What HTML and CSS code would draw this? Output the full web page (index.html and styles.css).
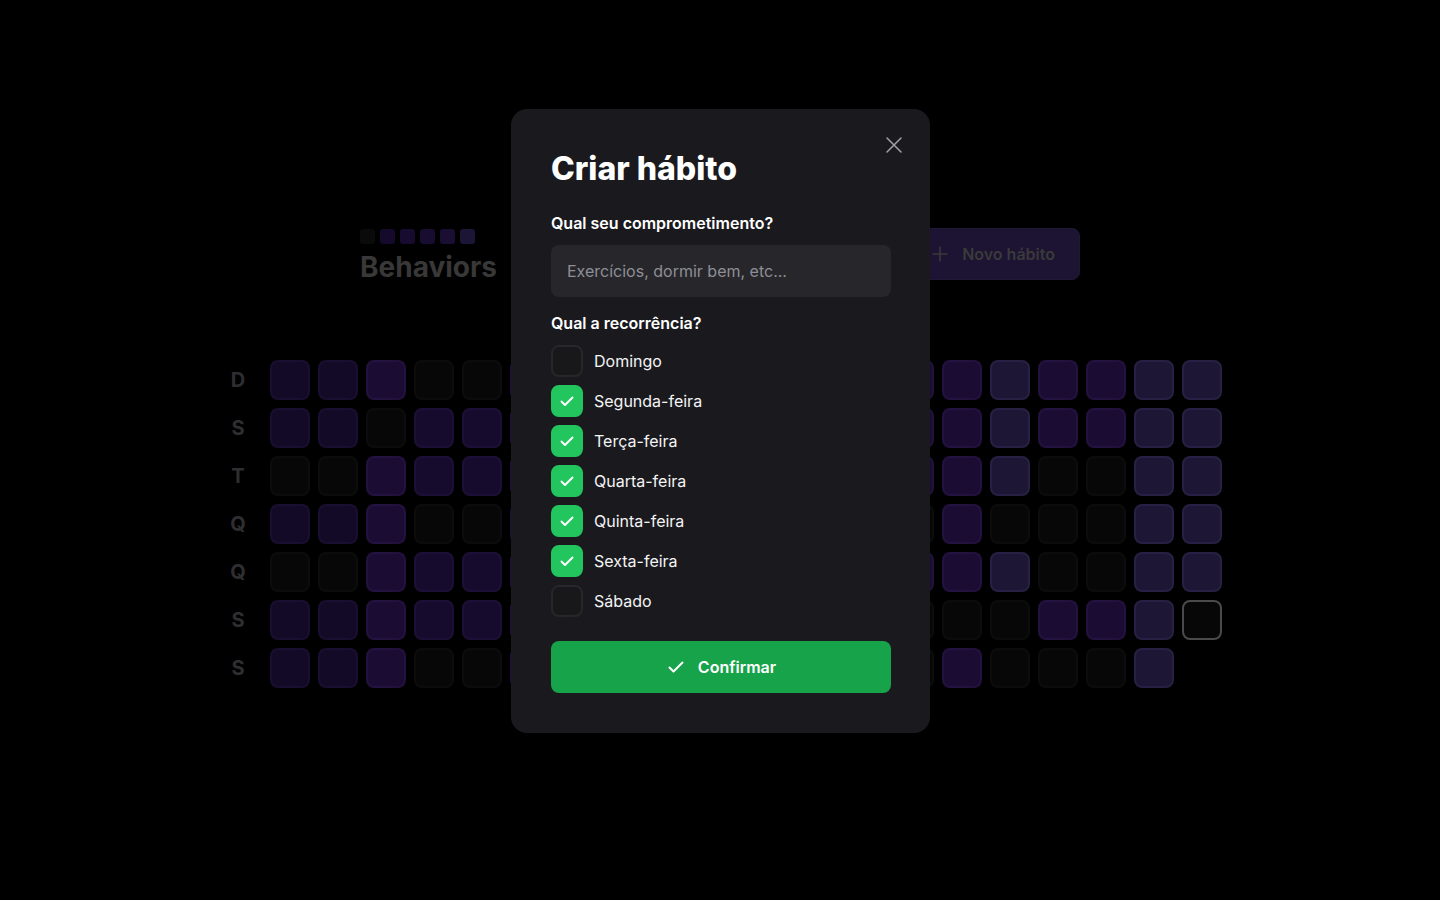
FILE: index.html
```html
<!DOCTYPE html>
<html lang="pt-BR">
<head>
<meta charset="utf-8">
<title>Behaviors - Criar hábito</title>
<link rel="stylesheet" href="styles.css">
</head>
<body>
<div class="page">
  <header class="header">
    <div class="logo">
      <div class="logo-squares">
        <span class="sq sq-0"></span>
        <span class="sq sq-1"></span>
        <span class="sq sq-2"></span>
        <span class="sq sq-3"></span>
        <span class="sq sq-4"></span>
        <span class="sq sq-5"></span>
      </div>
      <div class="logo-text">Behaviors</div>
    </div>
    <button class="new-habit" type="button">
      <svg class="plus" width="20" height="20" viewBox="0 0 20 20" fill="none"><path d="M3 10h14M10 3v14" stroke="currentColor" stroke-width="1.6" stroke-linecap="round"/></svg>
      <span>Novo hábito</span>
    </button>
  </header>

  <section class="summary">
    <div class="weekdays">
      <div class="wd">D</div>
      <div class="wd">S</div>
      <div class="wd">T</div>
      <div class="wd">Q</div>
      <div class="wd">Q</div>
      <div class="wd">S</div>
      <div class="wd">S</div>
    </div>
    <div class="days">
      <!-- row D -->
      <div class="d l1"></div><div class="d l1"></div><div class="d l3"></div><div class="d l0"></div><div class="d l0"></div>
      <div class="d l3"></div><div class="d l2"></div><div class="d l2"></div><div class="d l3"></div><div class="d l0"></div>
      <div class="d l3"></div><div class="d l3"></div><div class="d l3"></div><div class="d l3"></div><div class="d l3"></div>
      <div class="d l4"></div><div class="d l3"></div><div class="d l3"></div><div class="d l4"></div><div class="d l4"></div>
      <!-- row S -->
      <div class="d l1"></div><div class="d l1"></div><div class="d l0"></div><div class="d l2"></div><div class="d l2"></div>
      <div class="d l3"></div><div class="d l3"></div><div class="d l0"></div><div class="d l2"></div><div class="d l3"></div>
      <div class="d l3"></div><div class="d l2"></div><div class="d l3"></div><div class="d l3"></div><div class="d l3"></div>
      <div class="d l4"></div><div class="d l3"></div><div class="d l3"></div><div class="d l4"></div><div class="d l4"></div>
      <!-- row T -->
      <div class="d l0"></div><div class="d l0"></div><div class="d l3"></div><div class="d l2"></div><div class="d l2"></div>
      <div class="d l3"></div><div class="d l0"></div><div class="d l3"></div><div class="d l3"></div><div class="d l2"></div>
      <div class="d l3"></div><div class="d l0"></div><div class="d l3"></div><div class="d l3"></div><div class="d l3"></div>
      <div class="d l4"></div><div class="d l0"></div><div class="d l0"></div><div class="d l4"></div><div class="d l4"></div>
      <!-- row Q -->
      <div class="d l1"></div><div class="d l1"></div><div class="d l3"></div><div class="d l0"></div><div class="d l0"></div>
      <div class="d l2"></div><div class="d l3"></div><div class="d l3"></div><div class="d l0"></div><div class="d l3"></div>
      <div class="d l3"></div><div class="d l3"></div><div class="d l2"></div><div class="d l0"></div><div class="d l3"></div>
      <div class="d l0"></div><div class="d l0"></div><div class="d l0"></div><div class="d l4"></div><div class="d l4"></div>
      <!-- row Q -->
      <div class="d l0"></div><div class="d l0"></div><div class="d l3"></div><div class="d l2"></div><div class="d l2"></div>
      <div class="d l3"></div><div class="d l2"></div><div class="d l3"></div><div class="d l3"></div><div class="d l0"></div>
      <div class="d l3"></div><div class="d l3"></div><div class="d l3"></div><div class="d l3"></div><div class="d l3"></div>
      <div class="d l4"></div><div class="d l0"></div><div class="d l0"></div><div class="d l4"></div><div class="d l4"></div>
      <!-- row S -->
      <div class="d l1"></div><div class="d l1"></div><div class="d l3"></div><div class="d l2"></div><div class="d l2"></div>
      <div class="d l3"></div><div class="d l3"></div><div class="d l2"></div><div class="d l0"></div><div class="d l3"></div>
      <div class="d l3"></div><div class="d l2"></div><div class="d l0"></div><div class="d l0"></div><div class="d l0"></div>
      <div class="d l0"></div><div class="d l3"></div><div class="d l3"></div><div class="d l4"></div><div class="d today"></div>
      <!-- row S -->
      <div class="d l1"></div><div class="d l1"></div><div class="d l3"></div><div class="d l0"></div><div class="d l0"></div>
      <div class="d l3"></div><div class="d l0"></div><div class="d l3"></div><div class="d l3"></div><div class="d l3"></div>
      <div class="d l2"></div><div class="d l3"></div><div class="d l3"></div><div class="d l0"></div><div class="d l3"></div>
      <div class="d l0"></div><div class="d l0"></div><div class="d l0"></div><div class="d l4"></div><div class="d empty"></div>
    </div>
  </section>
</div>

<div class="modal" role="dialog" aria-labelledby="modal-title">
  <button class="close" type="button" aria-label="Fechar">
    <svg width="24" height="24" viewBox="0 0 24 24" fill="none"><path d="M5 5l14 14M19 5L5 19" stroke="currentColor" stroke-width="1.5" stroke-linecap="round"/></svg>
  </button>
  <h2 class="modal-title" id="modal-title">Criar hábito</h2>
  <form class="form">
    <label class="field-label" for="title">Qual seu comprometimento?</label>
    <input class="field-input" id="title" type="text" placeholder="Exercícios, dormir bem, etc...">

    <div class="field-label field-label-2">Qual a recorrência?</div>
    <div class="checks">
      <div class="check-row"><span class="box"></span><span class="check-text">Domingo</span></div>
      <div class="check-row"><span class="box checked"><svg width="20" height="20" viewBox="0 0 20 20" fill="none"><path d="M4.5 10.5l3.5 3.5 7.5-7.5" stroke="#fff" stroke-width="2" stroke-linecap="round" stroke-linejoin="round"/></svg></span><span class="check-text">Segunda-feira</span></div>
      <div class="check-row"><span class="box checked"><svg width="20" height="20" viewBox="0 0 20 20" fill="none"><path d="M4.5 10.5l3.5 3.5 7.5-7.5" stroke="#fff" stroke-width="2" stroke-linecap="round" stroke-linejoin="round"/></svg></span><span class="check-text">Terça-feira</span></div>
      <div class="check-row"><span class="box checked"><svg width="20" height="20" viewBox="0 0 20 20" fill="none"><path d="M4.5 10.5l3.5 3.5 7.5-7.5" stroke="#fff" stroke-width="2" stroke-linecap="round" stroke-linejoin="round"/></svg></span><span class="check-text">Quarta-feira</span></div>
      <div class="check-row"><span class="box checked"><svg width="20" height="20" viewBox="0 0 20 20" fill="none"><path d="M4.5 10.5l3.5 3.5 7.5-7.5" stroke="#fff" stroke-width="2" stroke-linecap="round" stroke-linejoin="round"/></svg></span><span class="check-text">Quinta-feira</span></div>
      <div class="check-row"><span class="box checked"><svg width="20" height="20" viewBox="0 0 20 20" fill="none"><path d="M4.5 10.5l3.5 3.5 7.5-7.5" stroke="#fff" stroke-width="2" stroke-linecap="round" stroke-linejoin="round"/></svg></span><span class="check-text">Sexta-feira</span></div>
      <div class="check-row"><span class="box"></span><span class="check-text">Sábado</span></div>
    </div>

    <button class="confirm" type="button">
      <svg width="20" height="20" viewBox="0 0 20 20" fill="none"><path d="M3.5 10.5l4 4 9-9" stroke="#fff" stroke-width="2" stroke-linecap="round" stroke-linejoin="round"/></svg>
      <span>Confirmar</span>
    </button>
  </form>
</div>
</body>
</html>
```

FILE: styles.css
```css
* { box-sizing: border-box; }

html, body {
  margin: 0;
  padding: 0;
  background: #000;
  color: #fff;
  font-family: Inter, "Noto Sans", Roboto, sans-serif;
  width: 1440px;
  height: 900px;
  overflow: hidden;
}

.page {
  display: flex;
  flex-direction: column;
  align-items: center;
  gap: 80px;
  padding-top: 228px;
}

.header {
  width: 720px;
  height: 52px;
  display: flex;
  justify-content: space-between;
  align-items: center;
}

.logo {
  display: flex;
  flex-direction: column;
  padding-top: 1px;
  height: 52px;
}

.logo-squares {
  display: flex;
  gap: 5px;
}

.sq {
  width: 15px;
  height: 15px;
  border-radius: 3px;
  background: #160b2c;
}
.sq-0 { background: #0a0a0a; }
.sq-1 { background: #150a2b; }
.sq-2 { background: #170b2f; }
.sq-3 { background: #180c31; }
.sq-4 { background: #1a0f33; }
.sq-5 { background: #1d1535; }

.logo-text {
  margin-top: 9px;
  font-size: 28px;
  line-height: 28px;
  font-weight: 700;
  color: #383838;
}

.new-habit {
  display: flex;
  align-items: center;
  gap: 12px;
  height: 52px;
  padding: 0 24px 0 25px;
  background: #1c1432;
  border: 1px solid #211838;
  border-radius: 8px;
  color: #3a3a3a;
  font-family: inherit;
  font-size: 16px;
  font-weight: 600;
}

.summary {
  display: flex;
  gap: 12px;
}

.weekdays {
  display: grid;
  grid-template-rows: repeat(7, 40px);
  gap: 8px;
}

.wd {
  width: 40px;
  height: 40px;
  display: flex;
  align-items: center;
  justify-content: center;
  font-size: 20px;
  font-weight: 700;
  color: #2e2e30;
}

.days {
  display: grid;
  grid-template-columns: repeat(20, 40px);
  grid-template-rows: repeat(7, 40px);
  gap: 8px;
}

.d {
  width: 40px;
  height: 40px;
  border-radius: 8px;
  border: 2px solid #0c0c0c;
  background: #070707;
}
.l0 { background: #070707; border-color: #0c0c0c; }
.l1 { background: #130a27; border-color: #1a0e31; }
.l2 { background: #160a2d; border-color: #1d1036; }
.l3 { background: #1b0c34; border-color: #23123e; }
.l4 { background: #1d1634; border-color: #272042; }
.today { background: #070707; border-color: #4a4a4a; }
.empty { background: transparent; border-color: transparent; }

/* Modal */
.modal {
  position: absolute;
  left: 511px;
  top: 109px;
  width: 419px;
  padding: 40px 39px 40px 40px;
  background: #1a1a1e;
  border-radius: 16px;
}

.close {
  position: absolute;
  right: 24px;
  top: 24px;
  width: 24px;
  height: 24px;
  padding: 0;
  border: 0;
  background: transparent;
  color: #a1a1aa;
  display: flex;
}

.modal-title {
  margin: 0;
  font-size: 32px;
  line-height: 40px;
  font-weight: 800;
  color: #fff;
}

.form {
  margin-top: 24px;
  display: flex;
  flex-direction: column;
}

.field-label {
  font-size: 16px;
  line-height: 20px;
  font-weight: 600;
  color: #fff;
}

.field-label-2 { margin-top: 16px; }

.field-input {
  margin-top: 12px;
  height: 52px;
  padding: 16px;
  border: 0;
  border-radius: 8px;
  background: #27272b;
  color: #fff;
  font-family: inherit;
  font-size: 16px;
  line-height: 20px;
  outline: none;
}
.field-input::placeholder { color: #8e8e95; }

.checks {
  margin-top: 12px;
  display: flex;
  flex-direction: column;
  gap: 8px;
}

.check-row {
  display: flex;
  align-items: center;
  gap: 11px;
}

.box {
  width: 32px;
  height: 32px;
  border-radius: 8px;
  border: 2px solid #27272a;
  background: #18181b;
  display: flex;
  align-items: center;
  justify-content: center;
}
.box.checked {
  background: #22c55e;
  border-color: #22c55e;
}

.check-text {
  font-size: 16px;
  line-height: 20px;
  color: #f4f4f5;
}

.confirm {
  margin-top: 24px;
  height: 52px;
  display: flex;
  align-items: center;
  justify-content: center;
  gap: 12px;
  border: 0;
  border-radius: 8px;
  background: #16a34a;
  color: #fff;
  font-family: inherit;
  font-size: 16px;
  font-weight: 600;
}
```
